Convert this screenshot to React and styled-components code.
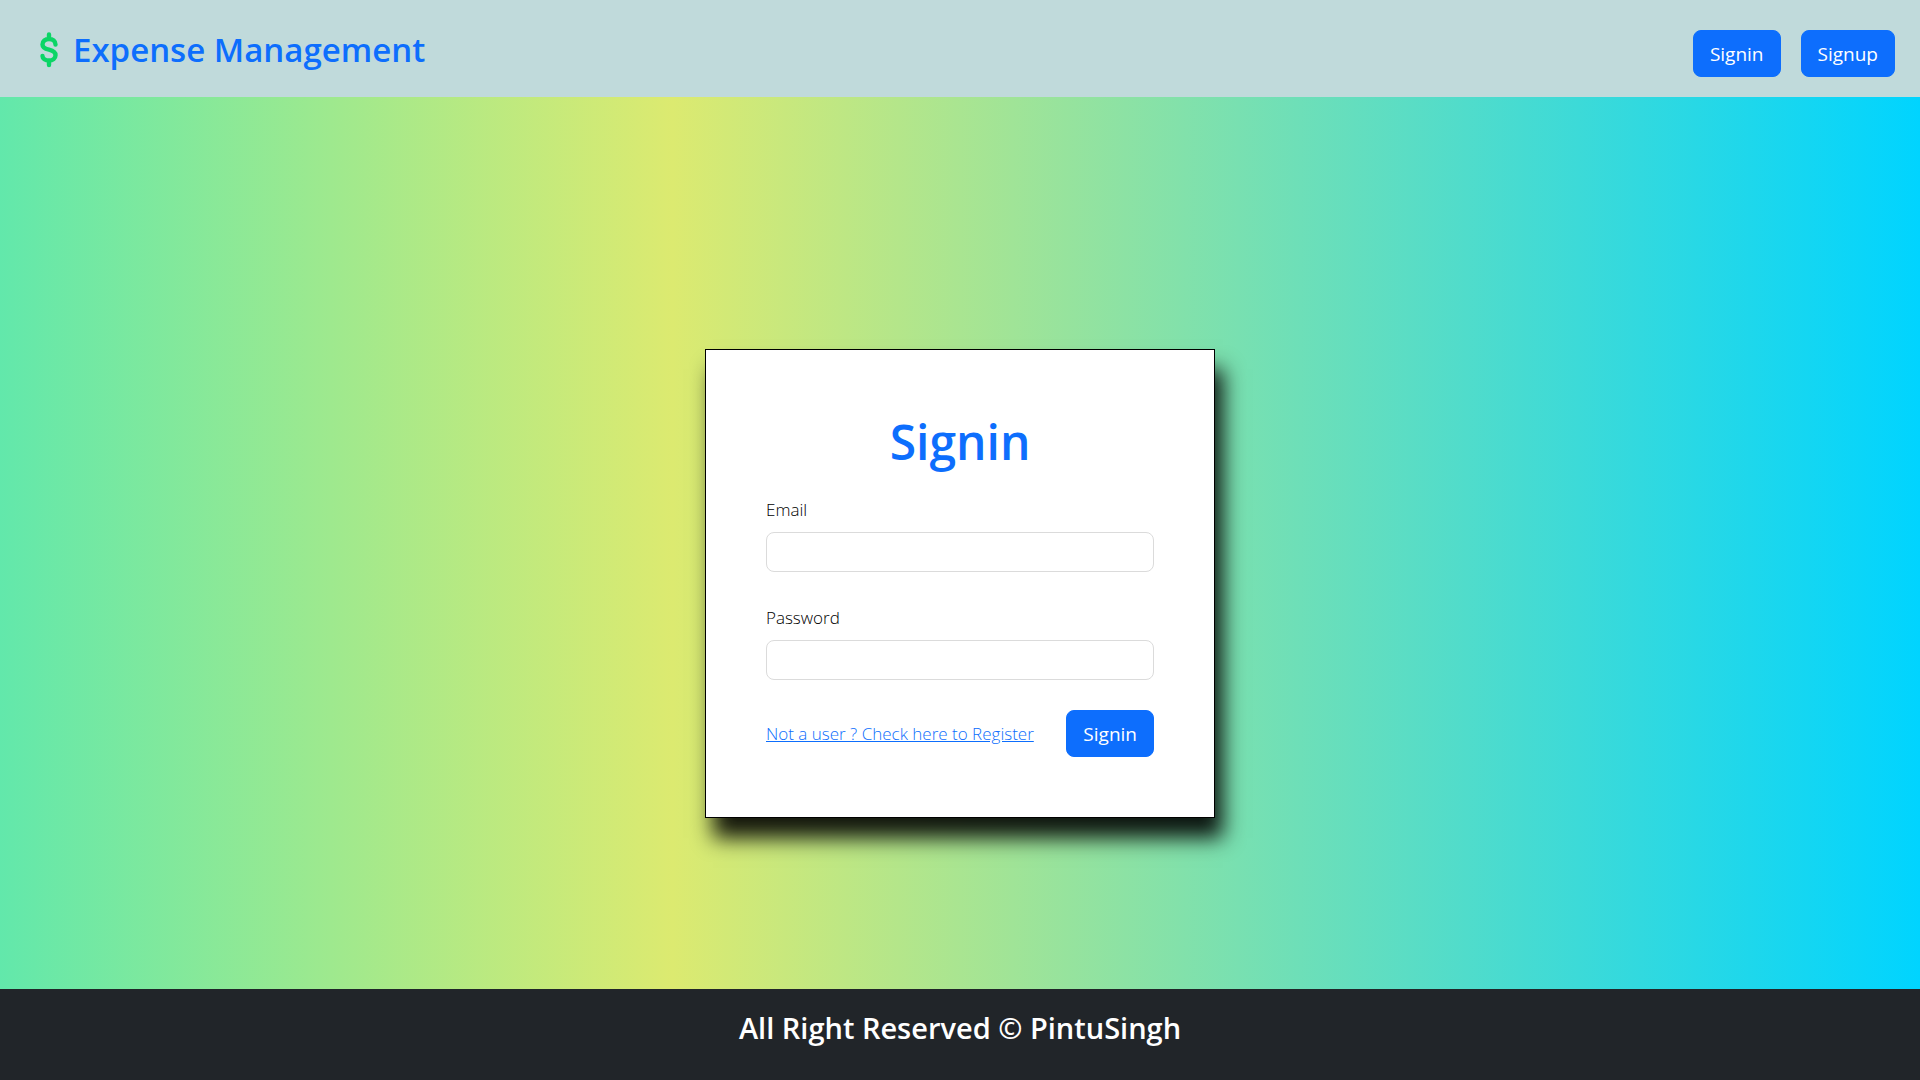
import React from "react";
import styled, { createGlobalStyle } from "styled-components";

const GlobalStyle = createGlobalStyle`
  *, *::before, *::after { box-sizing: border-box; }
  body {
    margin: 0;
    font-family: "Segoe UI", "Open Sans", "Noto Sans", sans-serif;
    font-size: 17px;
    line-height: 27px;
    color: #000;
  }
`;

const Page = styled.div`
  min-height: 100vh;
  display: flex;
  flex-direction: column;
`;

const Header = styled.header`
  display: flex;
  justify-content: space-between;
  align-items: flex-start;
  padding: 30px 25px 20px 38px;
  background: #c0dadb;
`;

const Brand = styled.a`
  display: flex;
  align-items: center;
  gap: 13px;
  color: #0d6efd;
  font-size: 33px;
  font-weight: 600;
  line-height: 40px;
  text-decoration: none;
`;

const BrandIcon = styled.svg`
  width: 22px;
  height: 36px;
  fill: none;
  stroke: #0bd566;
  stroke-width: 4.4px;
  stroke-linecap: round;
  stroke-linejoin: round;
`;

const Nav = styled.nav`
  display: flex;
  gap: 20px;
`;

const Button = styled.button`
  padding: 9px 16px 7px;
  border: 1px solid #0d6efd;
  border-radius: 8px;
  background: #0d6efd;
  color: #fff;
  font-family: inherit;
  font-size: 19px;
  font-weight: 400;
  line-height: 29px;
  cursor: pointer;
`;

const Main = styled.main`
  flex: 1;
  display: flex;
  justify-content: center;
  align-items: center;
  padding-top: 80px;
  background: linear-gradient(90deg, #62e8ab 0%, #dcea70 35%, #00d4ff 100%);
`;

const Card = styled.form`
  width: 100%;
  max-width: 510px;
  padding: 60px;
  border: 1px solid #000;
  background: #fff;
  box-shadow: 8px 20px 20px rgba(0, 0, 0, 0.9);
`;

const Title = styled.h1`
  margin: 0 0 22px;
  color: #0d6efd;
  font-size: 48px;
  font-weight: 600;
  line-height: 64px;
  text-align: center;
`;

const Field = styled.div`
  display: flex;
  flex-direction: column;
  gap: 9px;

  & + & {
    margin-top: 32px;
  }
`;

const Label = styled.label`
  font-weight: 300;
`;

const Input = styled.input`
  width: 100%;
  height: 40px;
  padding: 6px 12px;
  border: 1px solid #dbdbdb;
  border-radius: 8px;
  background: #fff;
  font: inherit;
`;

const Actions = styled.div`
  display: flex;
  justify-content: space-between;
  align-items: center;
  margin-top: 30px;
`;

const RegisterLink = styled.a`
  color: #0d6efd;
  font-weight: 300;
`;

const Footer = styled.footer`
  padding: 19px 20px 32px;
  background: #212529;
  color: #fff;
  font-size: 29px;
  font-weight: 600;
  line-height: 40px;
  text-align: center;
`;

export default function App() {
  return (
    <Page>
      <GlobalStyle />
      <Header>
        <Brand href="#">
          <BrandIcon viewBox="0 0 22 36" aria-hidden="true">
            <path d="M11 2.5V7M11 28.5V33M17.5 12.6C17.5 9 14.8 7 11 7S4.5 9 4.5 12.4C4.5 15.8 7.2 16.8 11 17.7S17.5 20 17.5 23.2S14.8 28.5 11 28.5S4.5 26.6 4.5 24" />
          </BrandIcon>
          Expense Management
        </Brand>
        <Nav>
          <Button type="button">Signin</Button>
          <Button type="button">Signup</Button>
        </Nav>
      </Header>
      <Main>
        <Card onSubmit={(event) => event.preventDefault()}>
          <Title>Signin</Title>
          <Field>
            <Label htmlFor="email">Email</Label>
            <Input id="email" type="email" />
          </Field>
          <Field>
            <Label htmlFor="password">Password</Label>
            <Input id="password" type="password" />
          </Field>
          <Actions>
            <RegisterLink href="#register">Not a user ? Check here to Register</RegisterLink>
            <Button type="submit">Signin</Button>
          </Actions>
        </Card>
      </Main>
      <Footer>All Right Reserved © PintuSingh</Footer>
    </Page>
  );
}
